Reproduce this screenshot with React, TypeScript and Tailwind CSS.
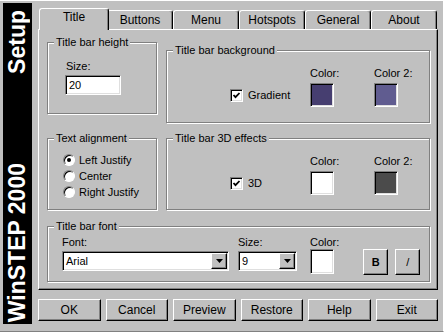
import React from 'react';

const sunken = "border border-t-[#808080] border-l-[#808080] border-r-white border-b-white shadow-[inset_1px_1px_0_#000,inset_-1px_-1px_0_#dfdfdf]";
const raised = "border border-t-white border-l-white border-r-black border-b-black shadow-[inset_-1px_-1px_0_#808080]";

const tabs = ['Title', 'Buttons', 'Menu', 'Hotspots', 'General', 'About'];
const buttons = ['OK', 'Cancel', 'Preview', 'Restore', 'Help', 'Exit'];

const Group = ({ label, className, children }: { label: string; className?: string; children?: React.ReactNode }) => (
  <div className={"relative border border-[#808080] shadow-[inset_1px_1px_0_#fff,1px_1px_0_#fff] " + (className ?? '')}>
    <span className="absolute left-[6px] top-[-7px] bg-[#c0c0c0] px-[2px] leading-[13px]">{label}</span>
    {children}
  </div>
);

const Swatch = ({ color, tall }: { color: string; tall?: boolean }) => (
  <div className={"w-[24px] " + (tall ? "h-[25px] " : "h-[24px] ") + sunken} style={{ backgroundColor: color }} />
);

const Check = ({ label }: { label: string }) => (
  <div className="flex h-[24px] items-center gap-[5px]">
    <span className={"flex h-[13px] w-[13px] items-center justify-center bg-white " + sunken}>
      <svg width="9" height="9" viewBox="0 0 9 9">
        <polyline points="1.5,4 3.5,6.2 7.5,2" fill="none" stroke="#000" strokeWidth="1.8" />
      </svg>
    </span>
    <span className="leading-[13px]">{label}</span>
  </div>
);

const ColorCol = ({ label, color, className }: { label: string; color: string; className?: string }) => (
  <div className={"flex flex-col " + (className ?? '')}>
    <span className="mb-[3px] leading-[13px]">{label}</span>
    <Swatch color={color} />
  </div>
);

const Radio = ({ label, checked }: { label: string; checked?: boolean }) => (
  <div className="flex h-[16px] items-center gap-[4px]">
    <span className="flex h-[12px] w-[12px] items-center justify-center rounded-full border border-t-[#808080] border-l-[#808080] border-r-white border-b-white bg-white shadow-[inset_1px_1px_0_#000]">
      {checked && <span className="h-[4px] w-[4px] rounded-full bg-black" />}
    </span>
    <span className="leading-[13px]">{label}</span>
  </div>
);

const Combo = ({ value, width }: { value: string; width: string }) => (
  <div className={"flex h-[20px] bg-white p-[1px] " + width + " " + sunken}>
    <span className="flex-1 pl-[2px] leading-[16px]">{value}</span>
    <span className={"flex h-[16px] w-[16px] items-center justify-center bg-[#c0c0c0] " + raised}>
      <svg width="7" height="4" viewBox="0 0 7 4">
        <polygon points="0,0 7,0 3.5,4" fill="#000" />
      </svg>
    </span>
  </div>
);

export default function App() {
  return (
    <div className="flex h-[332px] w-[444px] border-t border-r border-b border-t-white border-r-white border-b-[#808080] bg-[#c0c0c0] font-['Liberation_Sans',Arial,sans-serif] text-[11px] text-black">
      {/* Side banner */}
      <div className="ml-[3px] mt-[2px] flex h-[321px] w-[29px] flex-col items-center justify-between bg-black pt-[7px] pb-[2px] text-[23px] font-bold leading-none text-white">
        <span className="rotate-180 [writing-mode:vertical-rl]">Setup</span>
        <span className="rotate-180 whitespace-nowrap [writing-mode:vertical-rl]">WinSTEP 2000</span>
      </div>

      <div className="ml-[6px] flex w-[400px] flex-col pt-[7px]">
        {/* Tabs */}
        <div className="flex h-[21px] items-end pl-[3px] text-[12px]">
          {tabs.map((t, i) =>
            i === 0 ? (
              <div key={t} className="relative z-10 -mx-[2px] -mb-[1px] h-[22px] w-[70px] rounded-t-[3px] border-l border-t border-r border-l-white border-t-white border-r-black bg-[#c0c0c0] pt-[1px] text-center leading-[14px] shadow-[inset_-1px_0_0_#808080]">
                {t}
              </div>
            ) : (
              <div key={t} className="h-[19px] w-[66px] rounded-t-[3px] border-l border-t border-r border-l-white border-t-white border-r-black pt-[2px] text-center leading-[14px] shadow-[inset_-1px_0_0_#808080]">
                {t}
              </div>
            )
          )}
        </div>

        {/* Panel */}
        <div className="flex h-[261px] flex-col border border-t-white border-l-white border-r-black border-b-black pl-[8px] pt-[12px] shadow-[inset_-1px_-1px_0_#808080]">
          <div className="flex gap-[9px]">
            <Group label="Title bar height" className="h-[72px] w-[110px] pl-[17px] pt-[17px]">
              <div className="mb-[2px] ml-[1px] leading-[13px]">Size:</div>
              <div className={"h-[20px] w-[56px] bg-white pl-[3px] leading-[18px] " + sunken}>20</div>
            </Group>
            <Group label="Title bar background" className="mt-[8px] h-[73px] w-[264px] pl-[63px] pt-[16px]">
              <div className="flex items-end">
                <div className="w-[80px]"><Check label="Gradient" /></div>
                <ColorCol label="Color:" color="#463e70" className="w-[64px]" />
                <ColorCol label="Color 2:" color="#605c90" />
              </div>
            </Group>
          </div>

          <div className="mt-[15px] flex gap-[9px]">
            <Group label="Text alignment" className="h-[72px] w-[110px] pl-[15px] pt-[13px]">
              <Radio label="Left Justify" checked />
              <Radio label="Center" />
              <Radio label="Right Justify" />
            </Group>
            <Group label="Title bar 3D effects" className="h-[72px] w-[264px] pl-[63px] pt-[16px]">
              <div className="flex items-end">
                <div className="w-[80px]"><Check label="3D" /></div>
                <ColorCol label="Color:" color="#ffffff" className="w-[64px]" />
                <ColorCol label="Color 2:" color="#4b4b4b" />
              </div>
            </Group>
          </div>

          <Group label="Title bar font" className="mt-[16px] flex h-[56px] w-[383px] items-start pl-[14px] pt-[9px]">
            <div className="flex flex-col">
              <span className="mb-[2px] leading-[13px]">Font:</span>
              <Combo value="Arial" width="w-[167px]" />
            </div>
            <div className="ml-[9px] flex flex-col">
              <span className="mb-[2px] leading-[13px]">Size:</span>
              <Combo value="9" width="w-[59px]" />
            </div>
            <div className="ml-[13px] flex flex-col">
              <span className="leading-[13px]">Color:</span>
              <Swatch color="#ffffff" tall />
            </div>
            <button className={"ml-[24px] mt-[13px] h-[26px] w-[25px] bg-[#c0c0c0] text-[11px] font-bold " + raised}>B</button>
            <button className={"ml-[7px] mt-[13px] h-[26px] w-[25px] bg-[#c0c0c0] text-[11px] " + raised}>/</button>
          </Group>
        </div>

        {/* Bottom buttons */}
        <div className="mt-[9px] flex h-[22px] gap-[5px] text-[12px]">
          {buttons.map((b) => (
            <button key={b} className={"flex-1 bg-[#c0c0c0] " + raised}>{b}</button>
          ))}
        </div>
      </div>
    </div>
  );
}
